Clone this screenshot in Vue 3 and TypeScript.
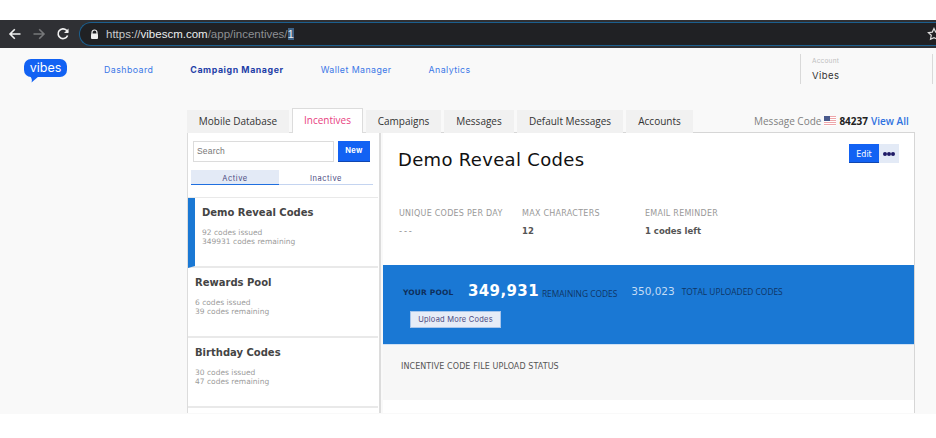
<script setup lang="ts">
const navItems = [
  { label: 'Dashboard', active: false },
  { label: 'Campaign Manager', active: true },
  { label: 'Wallet Manager', active: false },
  { label: 'Analytics', active: false },
]
const tabs = [
  { label: 'Mobile Database', w: 102, active: false },
  { label: 'Incentives', w: 71, active: true },
  { label: 'Campaigns', w: 75, active: false },
  { label: 'Messages', w: 70, active: false },
  { label: 'Default Messages', w: 106, active: false },
  { label: 'Accounts', w: 67, active: false },
]
const items = [
  { title: 'Demo Reveal Codes', issued: '92 codes issued', left: '349931 codes remaining', active: true },
  { title: 'Rewards Pool', issued: '6 codes issued', left: '39 codes remaining', active: false },
  { title: 'Birthday Codes', issued: '30 codes issued', left: '47 codes remaining', active: false },
]
const stats = [
  { label: 'UNIQUE CODES PER DAY', value: '---', w: 123, muted: true },
  { label: 'MAX CHARACTERS', value: '12', w: 123, muted: false },
  { label: 'EMAIL REMINDER', value: '1 codes left', w: 123, muted: false },
]
</script>

<template>
  <div class="shot">
    <div class="chrome">
      <svg class="ic" width="14" height="14" viewBox="0 0 14 14"><path d="M12.5 7H2M6.800 2.200 2 7l4.800 4.800" fill="none" stroke="#f1f1f1" stroke-width="1.600"/></svg>
      <svg class="ic" width="14" height="14" viewBox="0 0 14 14"><path d="M1.500 7H12M7.200 2.200 12 7l-4.800 4.800" fill="none" stroke="#77787a" stroke-width="1.600"/></svg>
      <svg class="ic" width="14" height="14" viewBox="0 0 14 14"><path d="M11.600 8.500A4.900 4.900 0 1 1 10.500 3.300L12 4.800" fill="none" stroke="#f1f1f1" stroke-width="1.600"/><path d="M12.500 1.500V6H8z" fill="#f1f1f1"/></svg>
      <div class="omni">
        <svg width="9" height="11" viewBox="0 0 9 11"><path d="M2 5V3.500a2.500 2.500 0 0 1 5 0V5" fill="none" stroke="#eee" stroke-width="1.200"/><rect x="1" y="4.500" width="7" height="5.500" rx="1" fill="#eee"/></svg>
        <span class="url"><span class="dim">https://</span><span class="host">vibescm.com</span><span class="dim">/app/incentives/</span><span class="sel">1</span></span>
      </div>
      <svg class="star" width="14" height="14" viewBox="0 0 14 14"><path d="m7 1.500 1.700 3.600 3.900.5-2.900 2.700.8 3.900L7 10.700l-3.500 1.500.8-3.900L1.400 5.600l3.900-.5z" fill="none" stroke="#ddd" stroke-width="1.200"/></svg>
    </div>

    <div class="page">
      <header class="nav">
        <div class="logo">
          <span class="bubble">vibes</span>
          <svg class="tail" width="10" height="7" viewBox="0 0 10 7"><path d="M1 0h9L2.500 6.500C3.500 4 2.500 2 1 0z" fill="#1262f3"/></svg>
        </div>
        <nav class="links">
          <span v-for="n in navItems" :key="n.label" class="link" :class="{ on: n.active }">{{ n.label }}</span>
        </nav>
        <div class="account">
          <span class="acc-label">Account</span>
          <span class="acc-name">Vibes</span>
        </div>
      </header>

      <div class="tabrow">
        <span v-for="t in tabs" :key="t.label" class="tab" :class="{ on: t.active }" :style="{ width: t.w + 'px' }">{{ t.label }}</span>
        <div class="msg">
          <span class="msg-label">Message Code</span>
          <svg width="12" height="10" viewBox="0 0 12 10" class="flag">
            <rect width="12" height="10" fill="#eda6aa"/>
            <path d="M0 1.500h12M0 3.500h12M0 5.500h12M0 7.500h12M0 9.500h12" stroke="#fff" stroke-width="1"/>
            <rect width="6" height="5" fill="#4a5a8c"/>
          </svg>
          <span class="msg-code">84237</span>
          <span class="msg-link">View All</span>
        </div>
      </div>

      <div class="body">
        <aside class="side">
          <div class="searchrow">
            <div class="search">Search</div>
            <button class="new" type="button">New</button>
          </div>
          <div class="seg">
            <span class="seg-a">Active</span>
            <span class="seg-b">Inactive</span>
          </div>
          <div class="list">
            <div v-for="i in items" :key="i.title" class="item" :class="{ on: i.active }">
              <div class="it-title">{{ i.title }}</div>
              <div class="it-sub">{{ i.issued }}</div>
              <div class="it-sub">{{ i.left }}</div>
            </div>
          </div>
        </aside>

        <section class="detail">
          <div class="head">
            <h1>Demo Reveal Codes</h1>
            <div class="actions">
              <button class="edit" type="button">Edit</button>
              <span class="more"><i></i><i></i><i></i></span>
            </div>
          </div>
          <div class="stats">
            <div v-for="s in stats" :key="s.label" class="stat" :style="{ width: s.w + 'px' }">
              <div class="st-label">{{ s.label }}</div>
              <div class="st-value" :class="{ muted: s.muted }">{{ s.value }}</div>
            </div>
          </div>
          <div class="pool">
            <div class="pool-row">
              <span class="p-title">YOUR POOL</span>
              <span class="p-big">349,931</span>
              <span class="p-cap low">REMAINING CODES</span>
              <span class="p-num">350,023</span>
              <span class="p-cap">TOTAL UPLOADED CODES</span>
            </div>
            <button class="upload" type="button">Upload More Codes</button>
          </div>
          <div class="status">INCENTIVE CODE FILE UPLOAD STATUS</div>
        </section>
      </div>
    </div>
  </div>
</template>

<style scoped>
.shot { width: 936px; height: 438px; overflow: hidden; background: #fff; padding-top: 20px; box-sizing: border-box; font-family: "Open Sans", sans-serif; }
.chrome { height: 28px; background: #2f3034; display: flex; align-items: center; padding-left: 8px; box-sizing: border-box; position: relative; }
.ic { margin-right: 10px; flex: none; }
.omni { flex: none; width: 900px; height: 24px; margin-left: -1px; border: 1px solid #1c5f8e; border-radius: 12px 0 0 12px; border-right: 0; background: #202124; display: flex; align-items: center; padding-left: 10px; gap: 7px; box-sizing: border-box; }
.url { font: 11.500px/14px "Liberation Sans", sans-serif; white-space: nowrap; }
.dim { color: #8e9093; }
.dim:first-child { color: #c8c9cb; }
.host { color: #eceded; }
.sel { background: #3d6185; color: #e8eef4; }
.star { position: absolute; right: -5px; top: 7px; }
.page { height: 366px; background: #f9f9f9; overflow: hidden; }
.nav { height: 60px; display: flex; align-items: flex-start; position: relative; }
.logo { position: relative; margin: 11px 0 0 24px; width: 43px; }
.bubble { display: block; width: 43px; height: 18px; border-radius: 7px; background: #1262f3; color: #fff; font: 12.500px/17px "Inter", sans-serif; text-align: center; }
.tail { position: absolute; left: 5px; top: 17px; }
.links { display: flex; margin: 15px 0 0 37px; }
.link { font: 8.800px/13px "Inter", sans-serif; letter-spacing: 0.05em; color: #3b78e7; white-space: nowrap; margin-right: 37px; }
.link.on { color: #1f3fa8; font-weight: 700; letter-spacing: 0.065em; }
.account { position: absolute; left: 800px; top: 6px; width: 133px; height: 30px; border-left: 1px solid #d9d9d9; border-right: 1px solid #d9d9d9; padding-left: 11px; box-sizing: border-box; }
.acc-label { display: block; font: 6.500px/9px "Inter", sans-serif; color: #bdbdbd; letter-spacing: 0.03em; margin-top: 3px; }
.acc-name { display: block; font: 9.500px/12px "Inter", sans-serif; color: #333; letter-spacing: 0.05em; margin-top: 4px; }
.tabrow { display: flex; align-items: flex-end; height: 25px; margin-left: 187px; gap: 3px; position: relative; z-index: 1; }
.tab { height: 23px; background: #f1f1f1; font-size: 10px; line-height: 22px; color: #333; text-align: center; box-sizing: border-box; white-space: nowrap; }
.tab.on { height: 25px; background: #fff; color: #e8417f; border: 1px solid #dcdcdc; border-bottom: 0; line-height: 23px; }
.msg { position: absolute; left: 567px; top: 5px; display: flex; align-items: center; gap: 3px; font-size: 10px; line-height: 16px; white-space: nowrap; }
.msg-label { color: #808080; }
.flag { margin: 0; }
.msg-code { color: #222; font-weight: 700; }
.msg-link { color: #2f72e0; font-weight: 600; }
.body { display: flex; margin-left: 187px; width: 728px; height: 281px; gap: 2px; margin-top: -1px; }
.side { width: 194px; flex: none; box-sizing: border-box; background: #fff; border: 1px solid #dcdcdc; border-width: 1px 2px 0 1px; }
.searchrow { display: flex; padding: 8px 0 0 5px; gap: 4px; }
.search { width: 141px; height: 21px; box-sizing: border-box; border: 1px solid #dcdcdc; font: 8.500px/19px "Liberation Sans", sans-serif; color: #777; padding-left: 3px; letter-spacing: 0.02em; }
.new { width: 32px; height: 21px; padding: 0; border: 0; border-bottom: 1px solid #0f46b0; background: #1262f3; color: #fff; font: 700 7.500px/20px "Inter", sans-serif; letter-spacing: 0.04em; }
.seg { display: flex; margin: 8px 0 0 3px; width: 182px; font: 7.500px/17px "Inter", sans-serif; letter-spacing: 0.07em; color: #4a4a82; text-align: center; }
.seg-a { width: 88px; height: 15px; background: #e3eaf6; border-bottom: 1px solid #1f6fe0; box-sizing: border-box; }
.seg-b { width: 94px; height: 15px; border-bottom: 1px solid #c4d4f0; box-sizing: border-box; }
.list { margin-top: 12px; width: 190px; border-top: 1px solid #e9e9e9; }
.item { height: 70px; box-sizing: border-box; border-bottom: 2px solid #e9e9e9; padding: 7px 0 0 7px; }
.item.on { border-left: 7px solid #1a78d4; padding-left: 7px; }
.it-title { font: 700 10px/16px "DejaVu Sans", sans-serif; color: #444; margin-bottom: 7px; white-space: nowrap; }
.it-sub { font: 7.500px/9px "DejaVu Sans", sans-serif; color: #9b9b9b; white-space: nowrap; }
.detail { flex: 1; min-width: 0; box-sizing: border-box; background: #fff; border: 1px solid #d6d6d6; border-width: 1px 1px 0 0; }
.head { height: 75px; padding: 14px 15px 0 15px; display: flex; justify-content: space-between; align-items: flex-start; box-sizing: border-box; }
h1 { margin: 0; font: 400 18px/26px "DejaVu Sans", sans-serif; color: #111; letter-spacing: 0.018em; }
.actions { display: flex; margin-top: -3px; }
.edit { width: 30px; height: 19px; padding: 3px 0 0; border: 0; border-bottom: 1px solid #0f46b0; background: #1262f3; color: #fff; font: 8px/15px "DejaVu Sans", sans-serif; }
.more { width: 20px; height: 19px; background: #e3eaf6; display: flex; align-items: center; justify-content: center; padding-top: 1px; box-sizing: border-box; }
.more i { width: 4px; height: 4px; border-radius: 50%; background: #1f1a66; }
.stats { display: flex; padding-left: 16px; height: 57px; box-sizing: border-box; }
.stat { flex: none; }
.st-label { font: 8px/12px "DejaVu Sans", sans-serif; letter-spacing: 0.032em; color: #999; white-space: nowrap; }
.st-value { font: 700 8.500px/12px "DejaVu Sans", sans-serif; color: #555; margin-top: 5px; white-space: nowrap; }
.st-value.muted { font-weight: 400; color: #888; letter-spacing: 0.22em; }
.pool { height: 80px; box-sizing: border-box; background: #1a78d4; padding: 15px 0 0 20px; border-bottom: 1px solid #cfe1f5; }
.pool-row { display: flex; align-items: baseline; height: 22px; white-space: nowrap; }
.p-title { font: 700 7.500px/12px "DejaVu Sans", sans-serif; letter-spacing: 0.02em; color: #0e2f5c; width: 65px; flex: none; }
.p-big { font: 700 15px/20px "DejaVu Sans", sans-serif; color: #fff; letter-spacing: 0.025em; margin-right: 3px; position: relative; top: 1px; }
.p-cap { font: 8.400px/12px "Open Sans", sans-serif; color: #0f3565; }
.p-cap.low { position: relative; top: 2px; margin-right: 14px; }
.p-num { font: 10.500px/16px "DejaVu Sans", sans-serif; color: #c4dcf5; margin-right: 7px; }
.upload { display: block; margin: 9px 0 0 7px; width: 91px; height: 17px; padding: 0; border: 1px solid #a8c6ec; background: #e6ecf7; color: #4a4a82; font: 7.500px/15px "Inter", sans-serif; letter-spacing: 0.03em; }
.status { height: 55px; background: #f7f7f7; padding: 16px 0 0 18px; box-sizing: border-box; font: 8px/12px "DejaVu Sans", sans-serif; color: #555; letter-spacing: 0.01em; }
</style>
